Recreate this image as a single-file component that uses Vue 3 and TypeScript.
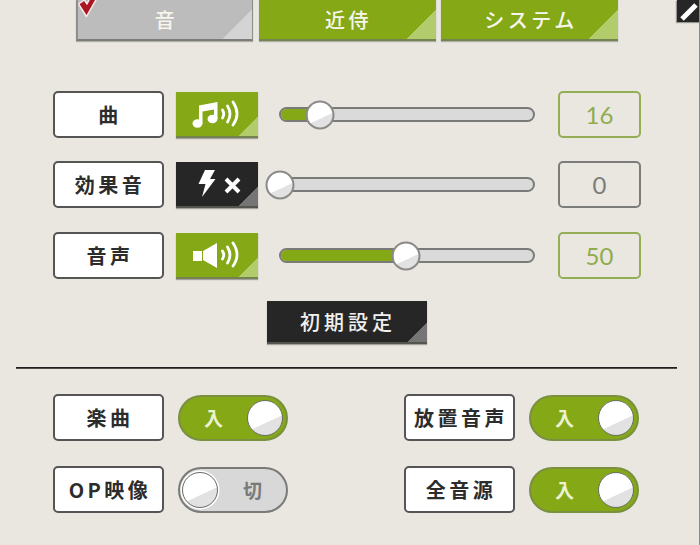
<script setup lang="ts">
interface SoundRow {
  label: string
  icon: 'music' | 'effect' | 'voice'
  value: number
}

interface ToggleItem {
  label: string
  on: boolean
}

const tabs = [
  { label: '音', active: true },
  { label: '近侍', active: false },
  { label: 'システム', active: false },
]

const soundRows: SoundRow[] = [
  { label: '曲', icon: 'music', value: 16 },
  { label: '効果音', icon: 'effect', value: 0 },
  { label: '音声', icon: 'voice', value: 50 },
]

const toggles: ToggleItem[] = [
  { label: '楽曲', on: true },
  { label: '放置音声', on: true },
  { label: 'OP映像', on: false },
  { label: '全音源', on: true },
]
</script>

<template>
  <div class="panel">
    <nav class="tabs">
      <button v-for="tab in tabs" :key="tab.label" class="tab" :class="{ selected: tab.active }">
        <svg v-if="tab.active" class="check" viewBox="0 0 20 20">
          <path d="M0.5 4 L6.5 0 L9 4 L12 -2 H19 L8.5 16.5 Z" fill="#ab1422" stroke="#f4ecec" stroke-width="1.5" stroke-linejoin="round" />
        </svg>
        {{ tab.label }}
      </button>
    </nav>

    <section class="sliders">
      <div v-for="row in soundRows" :key="row.label" class="sound-row" :class="{ muted: row.value === 0 }">
        <div class="label">{{ row.label }}</div>
        <button class="mute-btn">
          <svg class="mute-icon" viewBox="0 0 82 46">
            <g v-if="row.icon === 'music'" fill="#fff">
              <ellipse cx="21.5" cy="31.5" rx="5" ry="4.2" />
              <ellipse cx="36.5" cy="27" rx="5" ry="4.2" />
              <path d="M23 31 V13.5 L41.5 10 V27 H38 V17.5 L26.5 19.5 V31 Z" />
            </g>
            <g v-else-if="row.icon === 'voice'" fill="#fff">
              <rect x="17" y="18" width="9" height="10" />
              <path d="M27 18 L41 10 V35 L27 27 Z" />
            </g>
            <g v-else fill="#fff">
              <path d="M29 8 H39 L34 17 H39.5 L26 35 L29.5 22 H22.5 Z" />
              <path d="M50 17 L63 30 M63 17 L50 30" stroke="#fff" stroke-width="4" fill="none" />
            </g>
            <g v-if="row.icon !== 'effect'" fill="none" stroke="#fff" stroke-linecap="round" stroke-width="2.8">
              <path d="M46.5 18 Q49 22 46.5 26" />
              <path d="M51.5 14 Q56.5 22 51.5 30" />
              <path d="M57 10 Q65 22 57 33" />
            </g>
          </svg>
        </button>
        <div class="slider">
          <div class="track-fill" :style="{ width: row.value + '%' }"></div>
          <div class="thumb" :style="{ left: row.value + '%' }"></div>
        </div>
        <div class="value">{{ row.value }}</div>
      </div>
    </section>

    <div class="reset-wrap">
      <button class="reset">初期設定</button>
    </div>

    <hr class="divider" />

    <section class="toggles">
      <div v-for="item in toggles" :key="item.label" class="toggle-row">
        <div class="label">{{ item.label }}</div>
        <div class="switch" :class="{ off: !item.on }">
          <span class="switch-text">{{ item.on ? '入' : '切' }}</span>
          <span class="switch-thumb"></span>
        </div>
      </div>
    </section>

    <button class="close" aria-label="close">
      <svg viewBox="0 0 23 22">
        <path d="M5 19 L19 5" stroke="#fff" stroke-width="5" />
      </svg>
    </button>
  </div>
</template>

<style>
html,
body {
  margin: 0;
  background: #eae7e1;
  overflow: hidden;
}
</style>

<style scoped>
.panel {
  position: relative;
  width: 700px;
  height: 545px;
  box-sizing: border-box;
  border-right: 1px solid #8a8a86;
  font-family: "Noto Sans CJK JP", "Liberation Sans", sans-serif;
  overflow: hidden;
}

button {
  font-family: inherit;
  border: none;
  padding: 0;
}

.tabs {
  display: flex;
  gap: 5.5px;
  padding-left: 76px;
}

.tab {
  position: relative;
  width: 177px;
  height: 41px;
  box-sizing: border-box;
  padding: 0 0 1px 3px;
  background: linear-gradient(135deg, #84a816 calc(100% - 21px), #b2cc6c calc(100% - 21px));
  border-bottom: 2px solid #748350;
  box-shadow: 0 1px 1px rgba(0, 0, 0, 0.25);
  color: #f6f6ee;
  font-size: 20px;
  font-weight: 500;
  letter-spacing: 3.5px;
}

.tab.selected {
  background: linear-gradient(135deg, #bcbcbc calc(100% - 21px), #d4d4d4 calc(100% - 21px));
  border-left: 2px solid #8e8e8a;
  border-right: 1px solid #8e8e8a;
  border-bottom-color: #7d7d78;
}

.check {
  position: absolute;
  left: 0;
  top: 0;
  width: 20px;
  height: 20px;
}

.sliders {
  display: flex;
  flex-direction: column;
  gap: 23px;
  padding: 50px 0 0 53px;
}

.sound-row {
  display: flex;
  align-items: center;
  height: 47px;
}

.sound-row:last-child {
  margin-top: 1px;
}

.label {
  width: 111px;
  height: 47px;
  box-sizing: border-box;
  display: flex;
  align-items: center;
  justify-content: center;
  padding-left: 3px;
  background: #fff;
  border: 2px solid #555;
  border-radius: 5px;
  color: #2c2c2c;
  font-size: 20px;
  font-weight: 700;
  letter-spacing: 3.5px;
  white-space: nowrap;
}

.mute-btn {
  width: 82px;
  height: 46px;
  margin-left: 12px;
  display: block;
  background: linear-gradient(135deg, #84a816 calc(100% - 14px), #b2cc6c calc(100% - 14px));
  border-bottom: 2px solid #748350;
  box-sizing: border-box;
  box-shadow: 0 1px 1px rgba(0, 0, 0, 0.3);
  overflow: hidden;
}

.muted .mute-btn {
  background: linear-gradient(135deg, #262626 calc(100% - 14px), #757575 calc(100% - 14px));
  border-bottom-color: #55554f;
}

.mute-icon {
  display: block;
  width: 82px;
  height: 46px;
}

.slider {
  position: relative;
  width: 256px;
  height: 15px;
  box-sizing: border-box;
  margin: 0 23px 0 21px;
  background: #dadada;
  border: 2px solid #7a7a78;
  border-radius: 8px;
}

.track-fill {
  height: 100%;
  background: #84a816;
  border-radius: 6px 0 0 6px;
}

.thumb {
  position: absolute;
  top: 50%;
  width: 29px;
  height: 29px;
  margin-left: -1px;
  box-sizing: border-box;
  transform: translate(-50%, -50%);
  border: 2px solid #8a8a88;
  border-radius: 50%;
  background: linear-gradient(155deg, #fff 60%, #e2e2e2 61%);
}

.value {
  width: 83px;
  height: 47px;
  box-sizing: border-box;
  display: flex;
  align-items: center;
  justify-content: center;
  border: 2px solid #93ae54;
  border-radius: 5px;
  color: #8fac4e;
  font-family: Lato, "Liberation Sans", sans-serif;
  font-size: 24px;
}

.muted .value {
  border-color: #7c7c7a;
  color: #7c7c7a;
}

.reset-wrap {
  display: flex;
  justify-content: center;
  padding: 22px 0 0 0;
  width: 694px;
}

.reset {
  width: 160px;
  height: 43px;
  box-sizing: border-box;
  padding-left: 2px;
  background: linear-gradient(135deg, #262626 calc(100% - 14px), #757575 calc(100% - 14px));
  border-bottom: 2px solid #55554f;
  box-shadow: 0 1px 1px rgba(0, 0, 0, 0.3);
  color: #f0f0f0;
  font-size: 20px;
  font-weight: 500;
  letter-spacing: 4px;
}

.divider {
  width: 661px;
  height: 2px;
  margin: 23px 0 0 16px;
  border: none;
  background: linear-gradient(#1f1f1f 60%, #9a9a96);
}

.toggles {
  display: grid;
  grid-template-columns: 351px auto;
  row-gap: 25px;
  padding: 25px 0 0 53px;
}

.toggle-row {
  display: flex;
  align-items: center;
  gap: 14px;
}

.switch {
  position: relative;
  width: 110px;
  height: 46px;
  box-sizing: border-box;
  display: flex;
  align-items: center;
  padding-left: 24px;
  background: #84a816;
  border: 2px solid #7a9040;
  border-radius: 23px;
  color: #eaf2d0;
  font-size: 19px;
  font-weight: 700;
}

.switch.off {
  justify-content: flex-end;
  padding: 0 24px 0 0;
  background: #d8d8d8;
  border-color: #7a7a78;
  color: #7a7a78;
}

.switch-thumb {
  position: absolute;
  right: 3px;
  top: 3px;
  width: 36px;
  height: 36px;
  box-sizing: border-box;
  border: 1.5px solid #6e6e6c;
  border-radius: 50%;
  background: linear-gradient(155deg, #fff 60%, #e2e2e2 61%);
}

.switch.off .switch-thumb {
  right: auto;
  left: 2px;
  box-shadow: 0 0 0 1.5px #fff;
}

.close {
  position: absolute;
  top: 0;
  right: -1px;
  width: 23px;
  height: 22px;
  background: #262626;
  box-shadow: -1px 1px 1px rgba(0, 0, 0, 0.35);
}

.close svg {
  display: block;
  width: 23px;
  height: 22px;
}
</style>
